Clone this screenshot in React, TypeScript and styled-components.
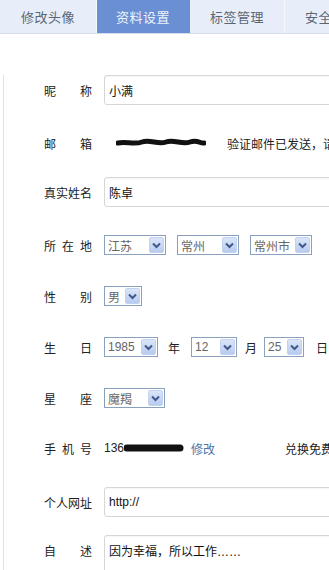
import React from "react";
import styled, { createGlobalStyle } from "styled-components";

const GlobalStyle = createGlobalStyle`
  html, body {
    margin: 0;
    padding: 0;
    background: #fff;
    overflow: hidden;
  }
  body {
    width: 329px;
    height: 570px;
    font-family: "Liberation Sans", "Noto Sans CJK SC", sans-serif;
    color: #222;
  }
`;

const Page = styled.div`
  width: 329px;
  height: 570px;
  overflow: hidden;
  white-space: nowrap;
`;

const TabBar = styled.div`
  display: flex;
  height: 33px;
  width: 420px;
  background: #e7eef9;
  border-bottom: 1px solid #d3ddec;
`;

const Tab = styled.div<{ $active?: boolean; $w: number }>`
  display: flex;
  align-items: center;
  justify-content: center;
  flex: none;
  width: ${(p) => p.$w}px;
  height: 33px;
  font-size: 13px;
  letter-spacing: 0.5px;
  color: ${(p) => (p.$active ? "#eef3fc" : "#5b6675")};
  background: ${(p) => (p.$active ? "#6b8fd3" : "transparent")};
  border-right: 1px solid ${(p) => (p.$active ? "#6b8fd3" : "#f5f8fd")};
`;

const Panel = styled.div`
  margin-left: 3px;
  border-left: 1px solid #e2e2e2;
  padding-left: 40px;
  height: 540px;
`;

const Row = styled.div<{ $mt: number }>`
  display: flex;
  align-items: center;
  height: 30px;
  margin-top: ${(p) => p.$mt}px;
`;

const Label = styled.div`
  flex: none;
  width: 48px;
  margin-right: 12px;
  font-size: 12px;
  color: #222;
  text-align: justify;
  text-align-last: justify;
  white-space: normal;
`;

const TextBox = styled.div<{ $h?: number }>`
  flex: none;
  box-sizing: border-box;
  width: 280px;
  height: ${(p) => p.$h ?? 30}px;
  align-self: flex-start;
  border: 1px solid #d6d6d6;
  border-radius: 3px;
  box-shadow: inset 0 1px 1px rgba(0, 0, 0, 0.04);
  padding: ${(p) => (p.$h ? "6px 4px" : "0 4px")};
  display: flex;
  align-items: ${(p) => (p.$h ? "flex-start" : "center")};
  font-size: 12px;
  color: #111;
`;

const Plain = styled.span<{ $ml?: number; $color?: string }>`
  flex: none;
  font-size: 12px;
  margin-left: ${(p) => p.$ml ?? 0}px;
  color: ${(p) => p.$color ?? "#222"};
`;

const Select = styled.div<{ $w: number; $ml?: number }>`
  flex: none;
  box-sizing: border-box;
  width: ${(p) => p.$w}px;
  height: 20px;
  margin-left: ${(p) => p.$ml ?? 0}px;
  border: 1px solid #8aa1bd;
  background: #fff;
  display: flex;
  align-items: center;
  justify-content: space-between;
  padding: 0 1px 0 3px;
  font-size: 12px;
  color: #666;
`;

const ArrowBtn = styled.span`
  flex: none;
  width: 15px;
  height: 16px;
  box-sizing: border-box;
  border-radius: 2px;
  border: 1px solid #c3d2ee;
  background: linear-gradient(#dbe5f8, #b8cbf0);
  display: flex;
  align-items: center;
  justify-content: center;
`;

const Scribble = styled.svg<{ $ml?: number }>`
  flex: none;
  margin-left: ${(p) => p.$ml ?? 0}px;
  display: block;
`;

const Chevron = () => (
  <svg width="9" height="7" viewBox="0 0 9 7">
    <path d="M1 1.5 L4.5 5 L8 1.5" fill="none" stroke="#41588a" strokeWidth="2" />
  </svg>
);

const Dropdown = ({ w, value, ml }: { w: number; value: string; ml?: number }) => (
  <Select $w={w} $ml={ml}>
    <span>{value}</span>
    <ArrowBtn>
      <Chevron />
    </ArrowBtn>
  </Select>
);

export default function App() {
  return (
    <Page>
      <GlobalStyle />
      <TabBar>
        <Tab $w={96}>修改头像</Tab>
        <Tab $w={92} $active>
          资料设置
        </Tab>
        <Tab $w={94}>标签管理</Tab>
        <Tab $w={94}>安全设置</Tab>
      </TabBar>
      <Panel>
        <Row $mt={41}>
          <Label>昵 称</Label>
          <TextBox>小满</TextBox>
        </Row>
        <Row $mt={23}>
          <Label>邮 箱</Label>
          <Scribble $ml={12} width="90" height="10" viewBox="0 0 90 10">
            <path
              d="M2 5 C10 3 18 7 26 4 S42 7 50 4 S66 7 74 4 S84 6 88 5"
              fill="none"
              stroke="#111"
              strokeWidth="5"
              strokeLinecap="round"
            />
          </Scribble>
          <Plain $ml={21}>验证邮件已发送，请查收</Plain>
        </Row>
        <Row $mt={19}>
          <Label>真实姓名</Label>
          <TextBox>陈卓</TextBox>
        </Row>
        <Row $mt={23}>
          <Label>所 在 地</Label>
          <Dropdown w={62} value="江苏" />
          <Dropdown w={62} value="常州" ml={11} />
          <Dropdown w={62} value="常州市" ml={11} />
        </Row>
        <Row $mt={21}>
          <Label>性 别</Label>
          <Dropdown w={38} value="男" />
        </Row>
        <Row $mt={21}>
          <Label>生 日</Label>
          <Dropdown w={54} value="1985" />
          <Plain $ml={10}>年</Plain>
          <Dropdown w={46} value="12" ml={11} />
          <Plain $ml={8}>月</Plain>
          <Dropdown w={40} value="25" ml={7} />
          <Plain $ml={12}>日</Plain>
        </Row>
        <Row $mt={21}>
          <Label>星 座</Label>
          <Dropdown w={61} value="魔羯" />
        </Row>
        <Row $mt={20}>
          <Label>手 机 号</Label>
          <Plain>136</Plain>
          <Scribble width="60" height="10" viewBox="0 0 60 10">
            <path d="M3 5 L56 5" fill="none" stroke="#111" strokeWidth="7" strokeLinecap="round" />
          </Scribble>
          <Plain $ml={7} $color="#4a74a8">
            修改
          </Plain>
          <Plain $ml={70}>兑换免费短信</Plain>
        </Row>
        <Row $mt={24}>
          <Label>个人网址</Label>
          <TextBox>http://</TextBox>
        </Row>
        <Row $mt={18}>
          <Label>自 述</Label>
          <TextBox $h={80}>因为幸福，所以工作……</TextBox>
        </Row>
      </Panel>
    </Page>
  );
}
